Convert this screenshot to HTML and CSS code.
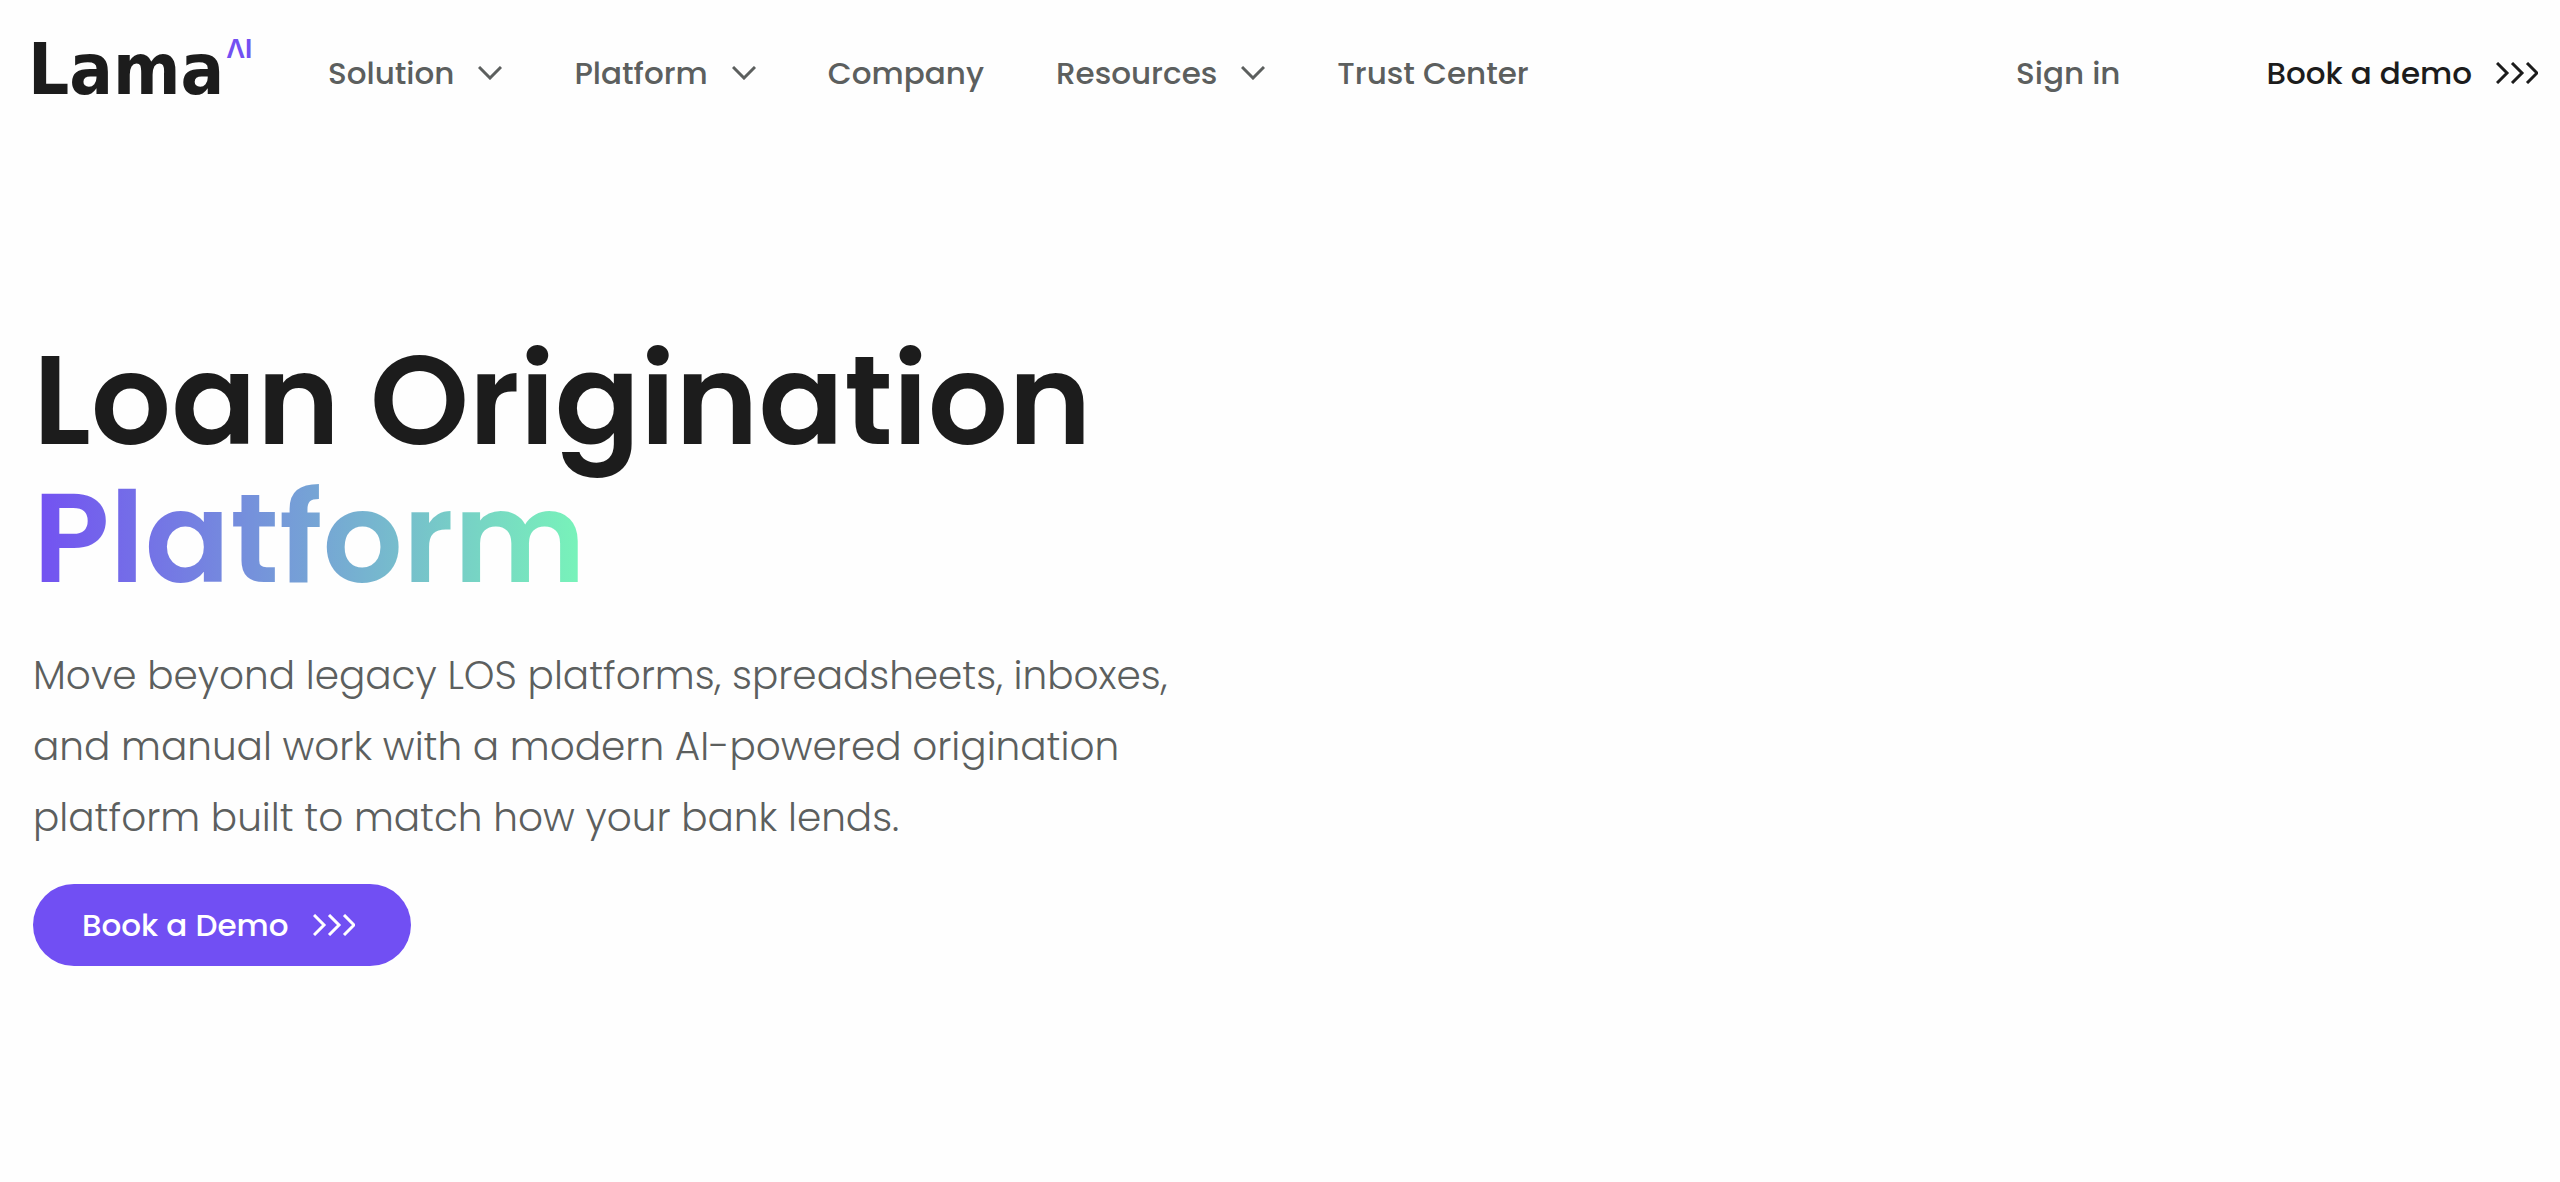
FILE: index.html
```
<!DOCTYPE html>
<html lang="en">
<head>
<meta charset="utf-8">
<meta name="viewport" content="width=device-width, initial-scale=1">
<title>Lama AI | Loan Origination Platform</title>
<link rel="stylesheet" href="styles.css">
</head>
<body>
<header class="header">
  <a class="logo" href="#" aria-label="Lama AI"><span class="logo-name">Lama</span><span class="logo-ai">ΛI</span></a>
  <nav class="nav" aria-label="Main">
    <button class="nav-item" type="button">Solution <svg class="chevron" viewBox="0 0 24 14" aria-hidden="true"><path d="M1 1l11 11L23 1"/></svg></button>
    <button class="nav-item" type="button">Platform <svg class="chevron" viewBox="0 0 24 14" aria-hidden="true"><path d="M1 1l11 11L23 1"/></svg></button>
    <a class="nav-item" href="#">Company</a>
    <button class="nav-item" type="button">Resources <svg class="chevron" viewBox="0 0 24 14" aria-hidden="true"><path d="M1 1l11 11L23 1"/></svg></button>
    <a class="nav-item" href="#">Trust Center</a>
  </nav>
  <div class="actions">
    <a class="sign-in" href="#">Sign in</a>
    <a class="demo-link" href="#">Book a demo <svg class="arrows" viewBox="0 0 42 22" aria-hidden="true"><path d="M1 1l10 10L1 21M16 1l10 10-10 10M31 1l10 10-10 10"/></svg></a>
  </div>
</header>
<main class="hero">
  <h1 class="title">Loan Origination<br><span class="gradient">Platform</span></h1>
  <p class="lead">Move beyond legacy LOS platforms, spreadsheets, inboxes,<br>and manual work with a modern AI-powered origination<br>platform built to match how your bank lends.</p>
  <a class="cta" href="#">Book a Demo <svg class="arrows" viewBox="0 0 42 22" aria-hidden="true"><path d="M1 1l10 10L1 21M16 1l10 10-10 10M31 1l10 10-10 10"/></svg></a>
</main>
</body>
</html>
```
FILE: styles.css
```
* {
  box-sizing: border-box;
}

body {
  margin: 0;
  background: #fefefe;
  color: #1c1c1c;
  font-family: Poppins, Inter, "Liberation Sans", sans-serif;
  font-size: 31px;
  font-weight: 500;
}

a {
  color: inherit;
  text-decoration: none;
}

svg {
  fill: none;
  stroke: currentColor;
  stroke-width: 3;
}

.header {
  display: flex;
  align-items: center;
  height: 146px;
  padding: 0 22px 0 28px;
}

.logo {
  display: flex;
  align-items: flex-start;
  gap: 2px;
  width: 300px;
  padding-bottom: 8px;
  line-height: 72px;
}

.logo-name {
  font-family: "DejaVu Sans Condensed", "DejaVu Sans", sans-serif;
  font-size: 72px;
  font-weight: 700;
}

.logo-ai {
  color: #7350f2;
  font-size: 26px;
  font-weight: 600;
  line-height: 32px;
}

.nav {
  display: flex;
  gap: 72px;
  color: #5c5f5e;
}

.nav-item {
  display: flex;
  align-items: center;
  gap: 24px;
  padding: 0;
  border: 0;
  background: none;
  color: inherit;
  font: inherit;
  cursor: pointer;
}

.chevron {
  width: 24px;
  height: 14px;
}

.actions {
  display: flex;
  align-items: center;
  gap: 146px;
  margin-left: auto;
}

.sign-in {
  color: #5c5f5e;
}

.demo-link,
.cta {
  display: flex;
  align-items: center;
  gap: 24px;
}

.arrows {
  width: 42px;
  height: 22px;
}

.hero {
  padding: 185px 33px 96px;
}

.title {
  margin: 0;
  font-size: 126px;
  font-weight: 600;
  line-height: 138px;
}

.gradient {
  display: inline-block;
  background: linear-gradient(90deg, #7350f2, #78f5b9);
  background-clip: text;
  -webkit-background-clip: text;
  color: transparent;
}

.lead {
  margin: 33px 0 31px;
  color: #5c5f5e;
  font-size: 39px;
  font-weight: 300;
  line-height: 71px;
}

.cta {
  width: fit-content;
  height: 82px;
  padding: 0 56px 0 49px;
  border-radius: 41px;
  background: #714ff3;
  color: #fff;
}
```
